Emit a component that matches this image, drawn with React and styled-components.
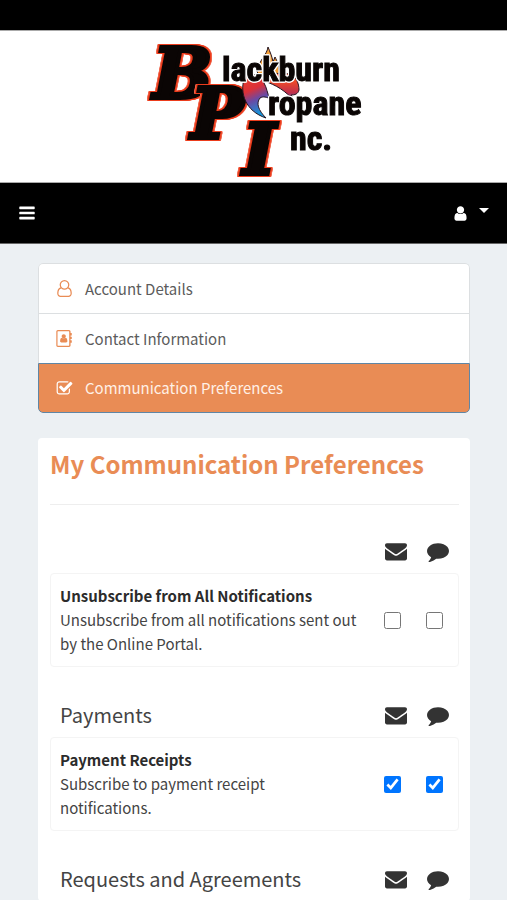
import React, { useState } from "react";
import styled, { createGlobalStyle } from "styled-components";

const GlobalStyle = createGlobalStyle`
  * {
    box-sizing: border-box;
  }
  body {
    margin: 0;
    background: #ecf0f3;
    color: #333;
    font-family: "Noto Sans CJK SC", "Open Sans", sans-serif;
    font-size: 15px;
    line-height: 24px;
  }
`;

const StatusBar = styled.div`
  height: 30px;
  background: #000;
`;

const Brand = styled.header`
  display: flex;
  justify-content: center;
  height: 153px;
  background: #fff;
  border-top: 1px solid #aaa;
  border-bottom: 1px solid #aaa;
`;

const Navbar = styled.nav`
  display: flex;
  align-items: center;
  justify-content: space-between;
  height: 61px;
  padding: 0 18px;
  background: #000;
  border-bottom: 1px solid #666;
`;

const NavButton = styled.button`
  display: flex;
  align-items: center;
  gap: 10px;
  padding: 0;
  border: 0;
  background: none;
  color: #fff;
`;

const Caret = styled.span`
  margin-bottom: 6px;
  border: 5px solid transparent;
  border-top-color: #fff;
  border-bottom: 0;
`;

const Main = styled.main`
  padding: 19px 37px 0 38px;
`;

const Menu = styled.div`
  display: flex;
  flex-direction: column;
  margin-bottom: 25px;
  border-radius: 5px;
  overflow: hidden;
`;

const MenuLink = styled.a`
  display: flex;
  align-items: center;
  gap: 12px;
  height: 50px;
  padding: 0 17px;
  border: 1px solid ${(p) => (p.$active ? "#5f86a5" : "#dcdfe1")};
  border-bottom-width: ${(p) => (p.$active ? "1px" : "0")};
  background: ${(p) => (p.$active ? "#e98c55" : "#fff")};
  color: ${(p) => (p.$active ? "#fff0e6" : "#5c5c5c")};
  text-decoration: none;
  svg {
    color: ${(p) => (p.$active ? "#fff" : "#e98c55")};
  }
  &:first-child {
    border-radius: 5px 5px 0 0;
  }
  &:last-child {
    border-radius: 0 0 5px 5px;
  }
`;

const Card = styled.section`
  padding: 11px 11px 0 12px;
  border-radius: 4px;
  background: #fff;
`;

const Title = styled.h1`
  margin: 0 0 24px;
  padding-bottom: 25px;
  border-bottom: 1px solid #eee;
  color: #e98c55;
  font-size: 24px;
  font-weight: 700;
  line-height: 30px;
`;

const Group = styled.div`
  margin-bottom: 26px;
  &:last-child {
    margin-bottom: 0;
  }
`;

const Row = styled.div`
  display: grid;
  grid-template-columns: 1fr 42px 32px;
  align-items: center;
  padding-left: 10px;
`;

const GroupHead = styled(Row)`
  height: 44px;
  color: #333;
`;

const GroupTitle = styled.h2`
  margin: 0;
  color: #444;
  font-size: 20px;
  font-weight: 400;
`;

const Option = styled(Row)`
  padding: 10px 0 10px 9px;
  border: 1px solid #f4f4f4;
  border-radius: 4px;
`;

const OptionText = styled.div`
  padding-right: 26px;
  color: #444;
`;

const OptionName = styled.strong`
  display: block;
  color: #2b2b2b;
`;

const Check = styled.input`
  width: 17px;
  height: 17px;
  margin: 0;
  accent-color: #0075ff;
`;

const Initials = styled.g`
  font-family: "DejaVu Serif", serif;
  font-size: 70px;
  font-style: italic;
  font-weight: 700;
  fill: #0a0504;
  stroke: #0a0504;
  stroke-width: 4px;
  text {
    filter: drop-shadow(1px 0 0 #ec3c1c) drop-shadow(-1px 0 0 #ec3c1c)
      drop-shadow(0 1px 0 #ec3c1c) drop-shadow(0 -1px 0 #ec3c1c)
      drop-shadow(1px 0 0 #f0644a) drop-shadow(-1px 0 0 #f0644a);
  }
`;

const Words = styled.g`
  font-family: "Liberation Sans Narrow", "Roboto Condensed", Roboto, sans-serif;
  font-size: 34px;
  font-weight: 700;
  fill: #0a0504;
  stroke: #0a0504;
  stroke-width: 1px;
  filter: drop-shadow(1px 0 0 #fff) drop-shadow(-1px 0 0 #fff)
    drop-shadow(0 1px 0 #fff) drop-shadow(0 -1px 0 #fff);
`;

const LogoSvg = styled.svg`
  overflow: visible;
`;

const paths = {
  user:
    "M1536 1399q0 109-62.5 187t-150.5 78h-854q-88 0-150.5-78t-62.5-187q0-85 8.5-160.5t31.5-152 58.5-131 94-89 134.5-34.5q131 128 313 128t313-128q76 0 134.5 34.5t94 89 58.5 131 31.5 152 8.5 160.5zm-256-887q0 159-112.5 271.5t-271.5 112.5-271.5-112.5-112.5-271.5 112.5-271.5 271.5-112.5 271.5 112.5 112.5 271.5z",
  userO:
    "M1329 784q47 14 89.5 38t89 73 79.5 115.5 55 172 22 236.5q0 154-100 263.5t-241 109.5h-854q-141 0-241-109.5t-100-263.5q0-131 22-236.5t55-172 79.5-115.5 89-73 89.5-38q-79-125-79-272 0-104 40.5-198.5t109.5-163.5 163.5-109.5 198.5-40.5 198.5 40.5 163.5 109.5 109.5 163.5 40.5 198.5q0 147-79 272zm-433-656q-159 0-271.5 112.5t-112.5 271.5 112.5 271.5 271.5 112.5 271.5-112.5 112.5-271.5-112.5-271.5-271.5-112.5zm427 1536q88 0 150.5-71.5t62.5-173.5q0-239-78.5-377t-225.5-145q-145 127-336 127t-336-127q-147 7-225.5 145t-78.5 377q0 102 62.5 173.5t150.5 71.5h854z",
  check:
    "M1472 930v318q0 119-84.5 203.5t-203.5 84.5h-832q-119 0-203.5-84.5t-84.5-203.5v-832q0-119 84.5-203.5t203.5-84.5h832q63 0 117 25 15 7 18 23 3 17-9 29l-49 49q-10 10-23 10-3 0-9-2-23-6-45-6h-832q-66 0-113 47t-47 113v832q0 66 47 113t113 47h832q66 0 113-47t47-113v-254q0-13 9-22l64-64q10-10 23-10 6 0 12 3 20 8 20 29zm231-489l-814 814q-24 24-57 24t-57-24l-430-430q-24-24-24-57t24-57l110-110q24-24 57-24t57 24l263 263 647-647q24-24 57-24t57 24l110 110q24 24 24 57t-24 57z",
  book:
    "M1202 1150q0 76-40 118t-96 42h-500q-56 0-96-42t-40-118q0-260 160-330 90 86 226 86t226-86q160 70 160 330zm-166-488q0 92-64 156t-156 64-156-64-64-156 64-156 156-64 156 64 64 156zM192 0h1184q66 0 113 47t47 113v160h96q32 0 32 32v192q0 32-32 32h-96v128h96q32 0 32 32v192q0 32-32 32h-96v128h96q32 0 32 32v192q0 32-32 32h-96v288q0 66-47 113t-113 47h-1184q-66 0-113-47t-47-113v-1472q0-66 47-113t113-47zm0 144q-32 0-32 32v1440q0 32 32 32h1168q32 0 32-32v-1440q0-32-32-32z",
  mail:
    "M1792 710v794q0 66-47 113t-113 47h-1472q-66 0-113-47t-47-113v-794q44 49 101 87 362 246 497 345 57 42 92.5 65.5t94.5 48 110 24.5h2q51 0 110-24.5t94.5-48 92.5-65.5q170-123 498-345 57-39 100-87zm0-294q0 79-49 151t-122 123q-376 261-468 325-10 7-42.5 31t-54 38.5-52 32.5-57.5 27-50 9h-2q-23 0-50-9t-57.5-27-52-32.5-54-38.5-42.5-31q-91-64-262-182.5t-205-142.5q-62-42-117-115.5t-55-136.5q0-78 41.5-130t118.5-52h1472q65 0 112.5 47t47.5 113z",
  comment:
    "M1792 896q0 174-120 321.5t-326 233-450 85.5q-70 0-145-8-198 175-460 242-49 14-114 22-17 2-30.5-9t-17.5-29v-1q-3-4-.5-12t2-10 4.5-9.5l6-9 7-8.5 8-9q7-8 31-34.5t34.5-38 31-39.5 32.5-51 27-59 26-76q-157-89-247.5-220t-90.5-281q0-130 71-248.5t191-204.5 286-136.5 348-50.5q244 0 450 85.5t326 233 120 321.5z",
  bars:
    "M192 256h1408q64 0 64 64v128q0 64-64 64h-1408q-64 0-64-64v-128q0-64 64-64zm0 512h1408q64 0 64 64v128q0 64-64 64h-1408q-64 0-64-64v-128q0-64 64-64zm0 512h1408q64 0 64 64v128q0 64-64 64h-1408q-64 0-64-64v-128q0-64 64-64z",
};

const Icon = ({ name, size }) => (
  <svg
    width={size}
    height={size}
    viewBox="0 0 1792 1792"
    fill="currentColor"
    fillRule="evenodd"
    aria-hidden="true"
  >
    <path d={paths[name]} />
  </svg>
);

const Logo = () => (
  <LogoSvg width="230" height="151" viewBox="0 0 230 151" role="img">
    <title>Blackburn Propane Inc.</title>
    <defs>
      <linearGradient id="lobe" x1="0" y1="0" x2="0.3" y2="1">
        <stop offset="0" stopColor="#e8402c" />
        <stop offset="0.4" stopColor="#dc3038" />
        <stop offset="0.65" stopColor="#6a4aa4" />
        <stop offset="1" stopColor="#1496dc" />
      </linearGradient>
      <linearGradient id="wing" x1="0" y1="0" x2="0" y2="1">
        <stop offset="0.3" stopColor="#ee4a28" />
        <stop offset="0.7" stopColor="#c0304c" />
        <stop offset="1" stopColor="#4454b4" />
      </linearGradient>
    </defs>
    <Initials>
      <text x="14" y="67">B</text>
      <text x="52" y="107">P</text>
      <text x="104" y="143">I</text>
    </Initials>
    <g stroke="#241420" strokeWidth="1">
      <path
        d="M129 16C128 24 120 29 118 40L122 52L140 48C141 36 138 30 136 26L134 31C133 25 131 21 129 16Z"
        fill="#f6a038"
      />
      <path
        d="M105 48C101 62 106 80 127 87C119 79 117 72 121 67C124 65 128 66 131 68C128 62 128 57 125 52L122 44L108 44Z"
        fill="url(#lobe)"
      />
      <path
        d="M125 50C137 54 147 60 155 70L152 64C156 64 159 63 160 59C160 52 157 47 153 43L128 42Z"
        fill="url(#wing)"
      />
    </g>
    <Words>
      <text x="83" y="50">lackburn</text>
      <text x="129" y="84">ropane</text>
      <text x="151" y="119">nc.</text>
    </Words>
  </LogoSvg>
);

const menu = [
  { icon: "userO", label: "Account Details" },
  { icon: "book", label: "Contact Information" },
  { icon: "check", label: "Communication Preferences", active: true },
];

const groups = [
  {
    option: {
      name: "Unsubscribe from All Notifications",
      text: "Unsubscribe from all notifications sent out by the Online Portal.",
      on: false,
    },
  },
  {
    title: "Payments",
    option: {
      name: "Payment Receipts",
      text: "Subscribe to payment receipt notifications.",
      on: true,
    },
  },
  { title: "Requests and Agreements" },
];

const PreferenceOption = ({ name, text, on }) => {
  const [email, setEmail] = useState(on);
  const [sms, setSms] = useState(on);
  return (
    <Option>
      <OptionText>
        <OptionName>{name}</OptionName>
        {text}
      </OptionText>
      <Check
        type="checkbox"
        aria-label={`${name} by email`}
        checked={email}
        onChange={() => setEmail(!email)}
      />
      <Check
        type="checkbox"
        aria-label={`${name} by text message`}
        checked={sms}
        onChange={() => setSms(!sms)}
      />
    </Option>
  );
};

const App = () => (
  <>
    <GlobalStyle />
    <StatusBar />
    <Brand>
      <Logo />
    </Brand>
    <Navbar>
      <NavButton type="button" aria-label="Menu">
        <Icon name="bars" size={18} />
      </NavButton>
      <NavButton type="button" aria-label="Account">
        <Icon name="user" size={17} />
        <Caret />
      </NavButton>
    </Navbar>
    <Main>
      <Menu>
        {menu.map((item) => (
          <MenuLink key={item.label} href="#" $active={item.active}>
            <Icon name={item.icon} size={17} />
            {item.label}
          </MenuLink>
        ))}
      </Menu>
      <Card>
        <Title>My Communication Preferences</Title>
        {groups.map(({ title, option }, i) => (
          <Group key={i}>
            <GroupHead>
              {title ? <GroupTitle>{title}</GroupTitle> : <span />}
              <Icon name="mail" size={22} />
              <Icon name="comment" size={22} />
            </GroupHead>
            {option && <PreferenceOption {...option} />}
          </Group>
        ))}
      </Card>
    </Main>
  </>
);

export default App;
